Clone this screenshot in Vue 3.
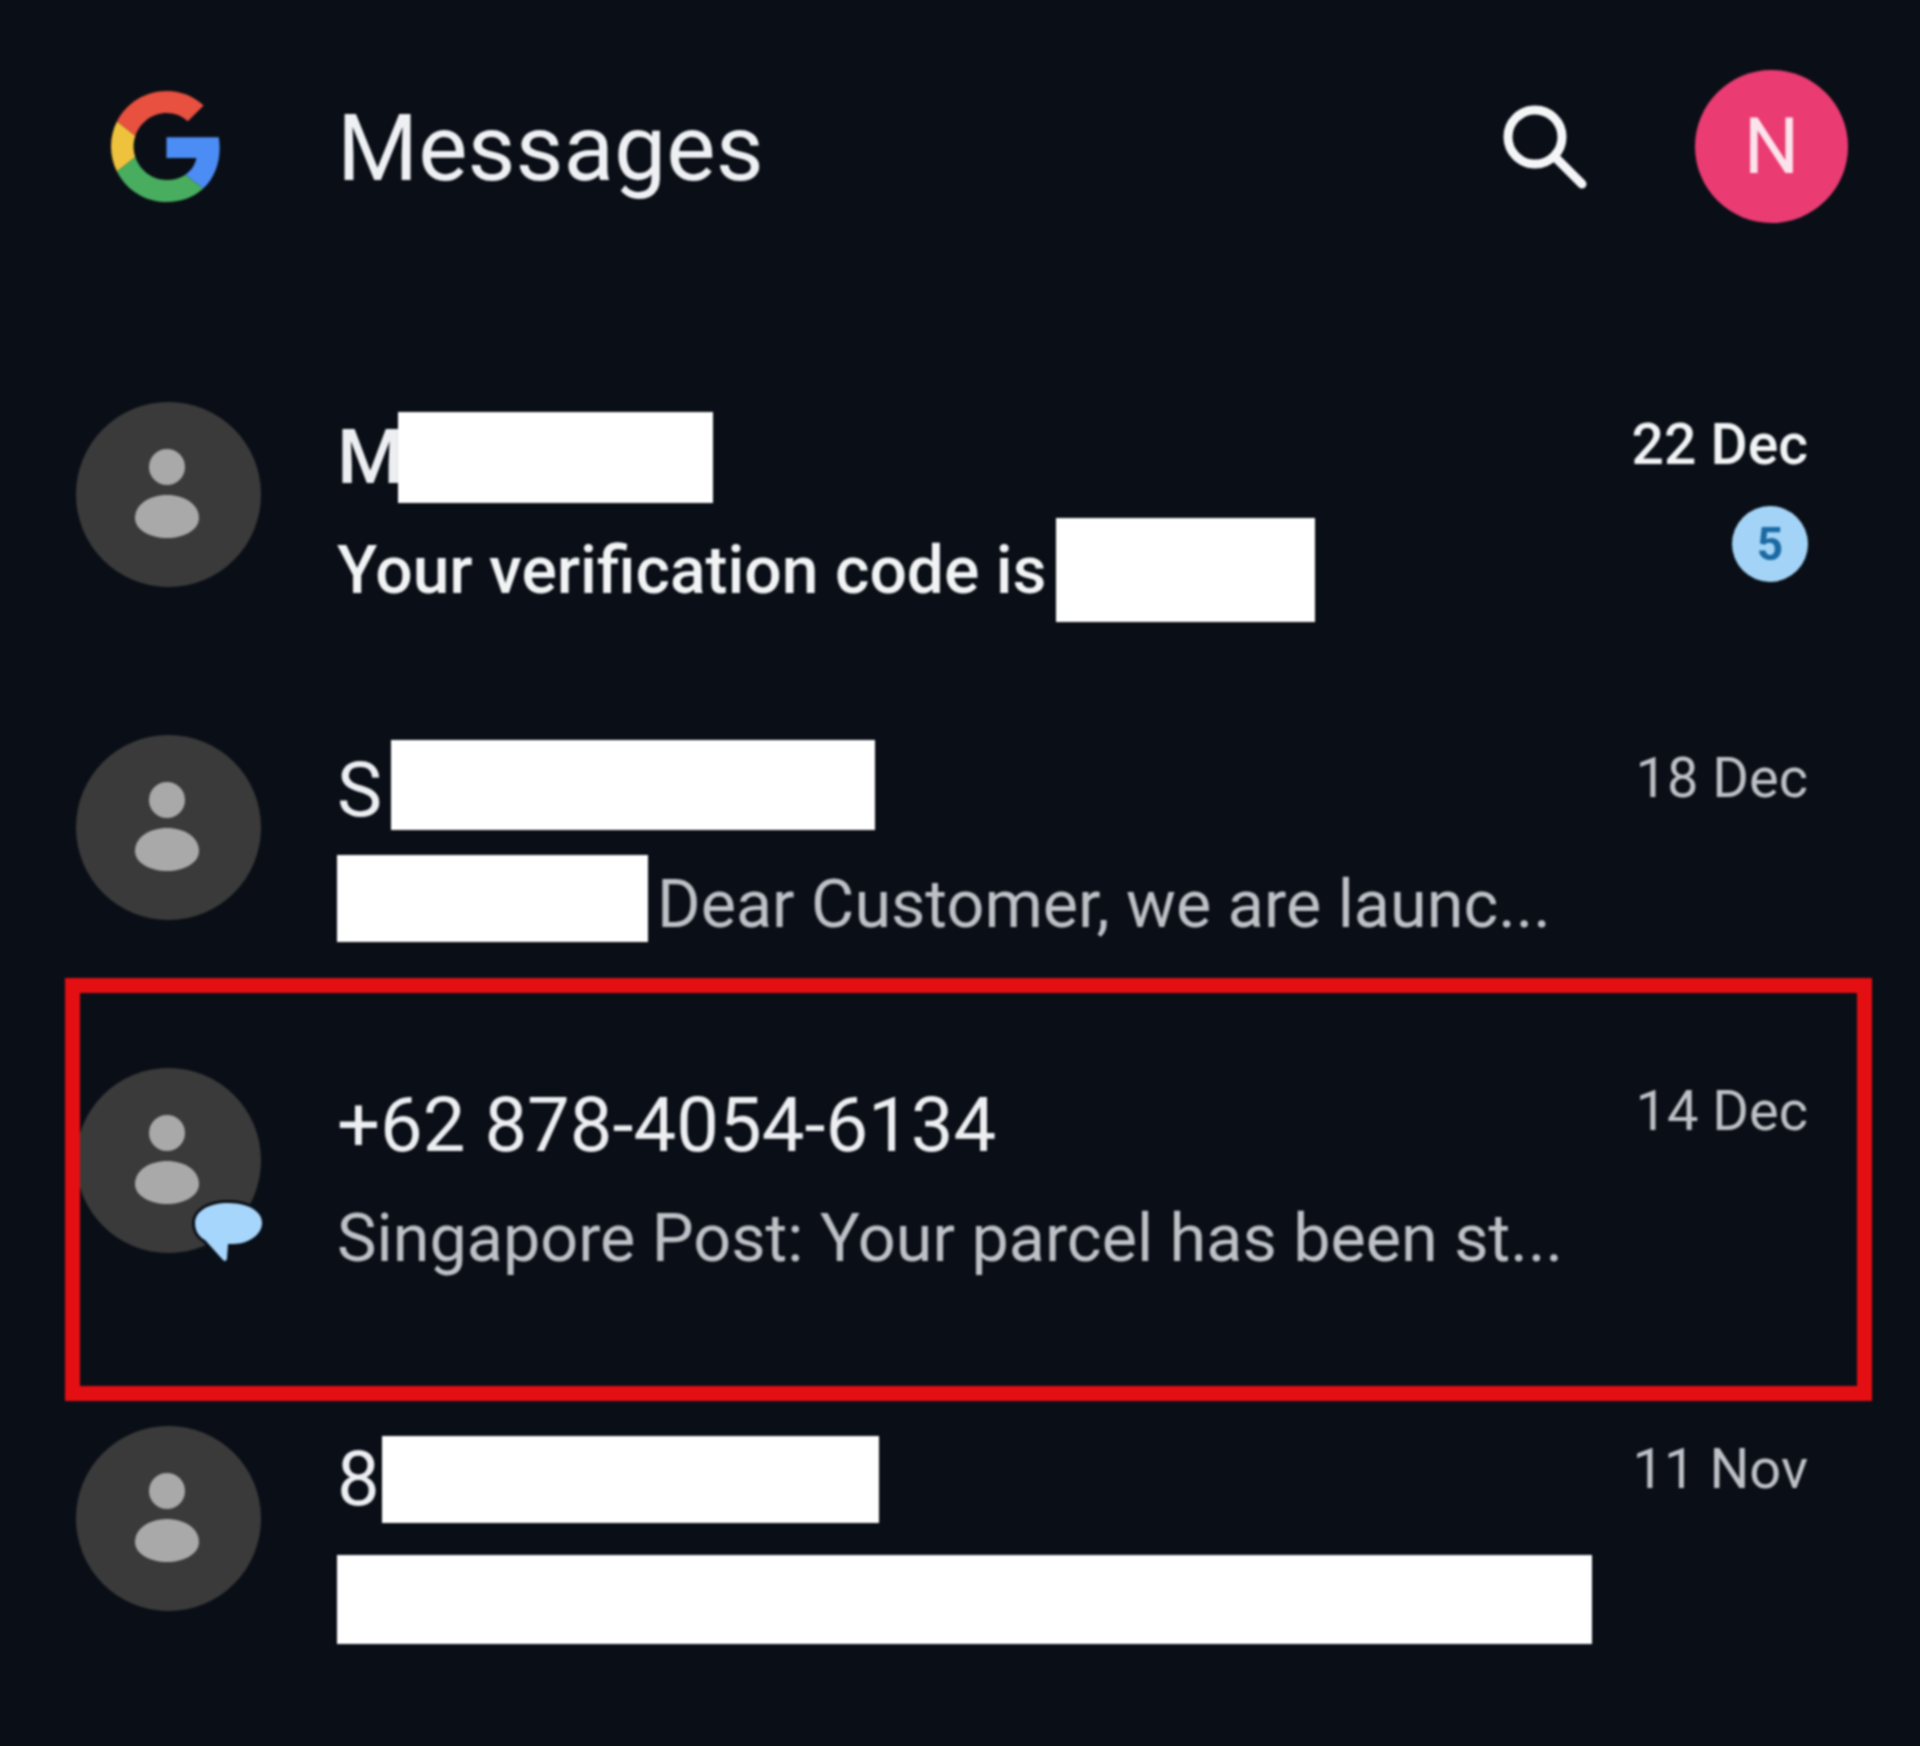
<template>
  <div class="page">
    <header class="topbar">
      <svg class="logo" viewBox="0 0 48 48">
        <path fill="#e8503f" d="M24 9.5c3.54 0 6.71 1.22 9.21 3.6l6.85-6.85C35.9 2.38 30.47 0 24 0 14.62 0 6.51 5.38 2.56 13.22l7.98 6.19C12.43 13.72 17.74 9.5 24 9.5z" />
        <path fill="#4c8cf5" d="M46.98 24.55c0-1.57-.15-3.09-.38-4.55H24v9.02h12.94c-.58 2.96-2.26 5.48-4.78 7.18l7.73 6c4.51-4.18 7.09-10.36 7.09-17.65z" />
        <path fill="#eec23c" d="M10.53 28.59c-.48-1.45-.76-2.99-.76-4.59s.27-3.14.76-4.59l-7.98-6.19C.92 16.46 0 20.12 0 24c0 3.88.92 7.54 2.56 10.78l7.97-6.19z" />
        <path fill="#48ad5e" d="M24 48c6.48 0 11.93-2.13 15.89-5.81l-7.73-6c-2.15 1.45-4.92 2.3-8.16 2.3-6.26 0-11.57-4.22-13.47-9.91l-7.98 6.19C6.51 42.62 14.62 48 24 48z" />
      </svg>
      <h1 class="title">Messages</h1>
      <svg class="search" viewBox="0 0 84 84" fill="none" stroke="#f4f5f7" stroke-width="9" stroke-linecap="round">
        <circle cx="32" cy="32" r="27" />
        <path d="M53 53l26 26" />
      </svg>
      <div class="account">N</div>
    </header>

    <main class="list">
      <section v-for="row in rows" :key="row.date" class="row" :class="row.cls">
        <div class="avatar">
          <svg class="person" viewBox="0 0 185 185">
            <circle cx="91" cy="65" r="18" fill="#a9a9a9" />
            <path d="M59 116c0-14 15-23 32-23s32 9 32 23c0 12-15 20-32 20s-32-8-32-20z" fill="#a9a9a9" />
          </svg>
          <svg v-if="row.flagged" class="bubble" viewBox="0 0 67 58">
            <path d="M33 0c20 0 34 8 34 20S53 41 38 41h-5l-1 14c-.2 3-2 4-4 2L10 37C3 33 0 27 0 20 0 8 14 0 33 0z" fill="#a6d6fc" />
          </svg>
        </div>

        <div class="body">
          <div class="name">
            <span v-if="row.lead" class="lead" :style="{ width: row.leadWidth + 'px' }">{{ row.lead }}</span>
            <span v-if="row.nameBox" class="redact" :style="{ width: row.nameBox[0] + 'px', height: row.nameBox[1] + 'px' }"></span>
            <span v-if="row.phone">{{ row.phone }}</span>
          </div>
          <div class="msg">
            <span v-if="row.boxFirst" class="redact" :style="{ width: row.msgBox[0] + 'px', height: row.msgBox[1] + 'px' }"></span>
            <span v-if="row.text" class="msg-text">{{ row.text }}</span>
            <span v-if="row.msgBox && !row.boxFirst" class="redact" :style="{ width: row.msgBox[0] + 'px', height: row.msgBox[1] + 'px' }"></span>
          </div>
        </div>

        <div class="meta">
          <div class="date">{{ row.date }}</div>
          <div v-if="row.badge" class="badge">{{ row.badge }}</div>
        </div>

        <div v-if="row.flagged" class="highlight"></div>
      </section>
    </main>
  </div>
</template>

<script setup>
const rows = [
  {
    cls: 'row-unread',
    lead: 'M',
    leadWidth: 61,
    nameBox: [315, 91],
    text: 'Your verification code is',
    msgBox: [259, 104],
    date: '22 Dec',
    badge: 5
  },
  {
    cls: 'row-second',
    lead: 'S',
    leadWidth: 54,
    nameBox: [484, 90],
    text: 'Dear Customer, we are launc...',
    msgBox: [311, 87],
    boxFirst: true,
    date: '18 Dec'
  },
  {
    cls: 'row-flagged',
    phone: '+62 878-4054-6134',
    text: 'Singapore Post: Your parcel has been st...',
    date: '14 Dec',
    flagged: true
  },
  {
    cls: 'row-last',
    lead: '8',
    leadWidth: 45,
    nameBox: [497, 87],
    msgBox: [1255, 89],
    date: '11 Nov'
  }
]
</script>

<style>
html,
body {
  margin: 0;
  background: #0a0f17;
}
</style>

<style scoped>
.page {
  height: 1746px;
  box-sizing: border-box;
  padding-top: 70px;
  background: #0a0f17;
  color: #e8eaed;
  font-family: Roboto, "Liberation Sans", sans-serif;
  overflow: hidden;
  filter: blur(0.9px);
}

.topbar {
  display: flex;
  align-items: center;
  height: 153px;
  padding: 0 72px 0 111px;
}

.logo {
  width: 111px;
  height: 115px;
  flex: none;
}

.title {
  margin: 4px 0 0 115px;
  flex: 1;
  font-size: 93px;
  font-weight: 400;
  line-height: 100px;
  color: #eef0f3;
}

.search {
  width: 84px;
  height: 84px;
  margin: 0 108px 0 0;
  flex: none;
}

.account {
  width: 153px;
  height: 153px;
  border-radius: 50%;
  background: #ea3b72;
  color: #fbe3ec;
  font-size: 78px;
  font-weight: 400;
  display: flex;
  align-items: center;
  justify-content: center;
}

.list {
  margin-top: 179px;
  padding: 0 112px 0 76px;
}

.row {
  position: relative;
  display: flex;
  height: 333px;
}

.row-flagged {
  height: 358px;
}

.avatar {
  position: relative;
  width: 185px;
  height: 185px;
  flex: none;
  border-radius: 50%;
  background: #3a3a3a;
}

.person {
  display: block;
  width: 185px;
  height: 185px;
}

.bubble {
  position: absolute;
  left: 119px;
  top: 135px;
  width: 67px;
  height: 58px;
  stroke: #0a0f17;
  stroke-width: 6px;
  paint-order: stroke;
  overflow: visible;
}

.body {
  flex: 1;
  margin-left: 76px;
  min-width: 0;
}

.row-unread .body {
  padding-top: 9px;
}

.row-second .body {
  padding-top: 4px;
}

.row-flagged .body {
  padding-top: 11px;
}

.row-last .body {
  padding-top: 7px;
}

.name {
  display: flex;
  align-items: center;
  height: 92px;
  font-size: 76px;
  color: #eceef1;
  white-space: nowrap;
}

.lead {
  display: block;
  flex: none;
}

.row-second .lead {
  padding-top: 10px;
}

.msg {
  display: flex;
  align-items: center;
  gap: 9px;
  height: 100px;
  margin-top: 17px;
  font-size: 66.5px;
  color: #bdc1c6;
  white-space: nowrap;
}

.row-second .msg-text {
  padding-top: 12px;
}

.row-last .msg {
  margin-top: 24px;
}

.row-unread .msg {
  color: #f1f3f4;
  font-size: 66px;
  font-weight: 500;
}

.row-unread .name {
  font-weight: 500;
}

.redact {
  display: block;
  flex: none;
  background: #fff;
}

.meta {
  flex: none;
  display: flex;
  flex-direction: column;
  align-items: flex-end;
  padding-top: 13px;
}

.date {
  font-size: 56px;
  line-height: 60px;
  color: #bdc1c6;
}

.row-unread .date {
  color: #f1f3f4;
  font-size: 57px;
  font-weight: 500;
}

.badge {
  width: 76px;
  height: 76px;
  margin-top: 31px;
  border-radius: 50%;
  background: #a3d4f7;
  color: #1c6aa3;
  font-size: 46px;
  font-weight: 700;
  display: flex;
  align-items: center;
  justify-content: center;
}

.highlight {
  position: absolute;
  left: -11px;
  top: -90px;
  width: 1807px;
  height: 423px;
  box-sizing: border-box;
  border: 15px solid #e30f13;
  pointer-events: none;
}
</style>
